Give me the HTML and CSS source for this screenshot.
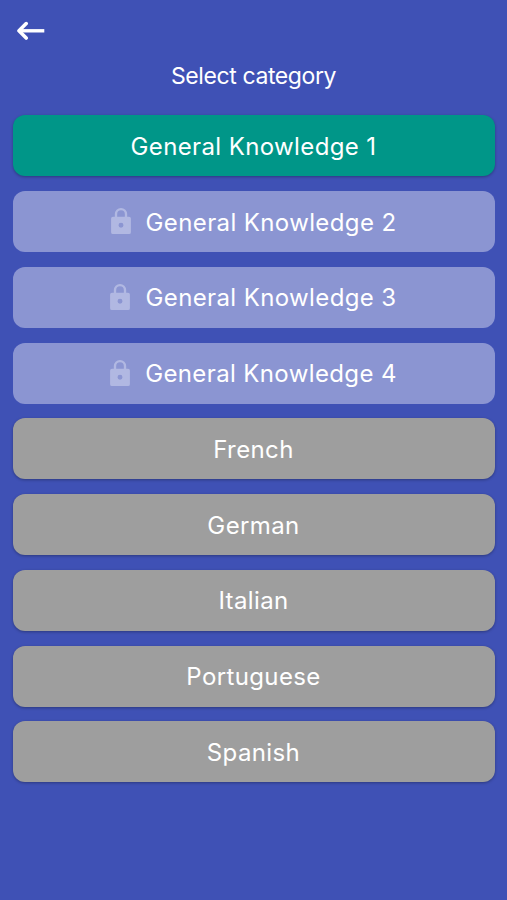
FILE: index.html
```html
<!DOCTYPE html>
<html lang="en">
<head>
<meta charset="utf-8">
<title>Select category</title>
<link rel="stylesheet" href="styles.css">
</head>
<body>
<header class="bar">
  <svg class="back" viewBox="0 0 28 20"><path class="shaft" d="M27.300 9.800H3"/><path class="head" d="M9.200 2.600L2 9.800l7.200 7.200"/></svg>
</header>
<h1 class="title">Select category</h1>
<main class="list">
  <button class="item active"><span class="label">General Knowledge 1</span></button>
  <button class="item locked"><svg class="lock" viewBox="4 1 16 21"><path d="M18.500 8H17V6A5 5 0 0 0 7 6v2H5.500A1.500 1.500 0 0 0 4 9.500v11A1.500 1.500 0 0 0 5.500 22h13a1.500 1.500 0 0 0 1.500-1.500v-11A1.500 1.500 0 0 0 18.500 8zM12 17a2 2 0 1 1 0-4 2 2 0 0 1 0 4zM8.900 8V6a3.100 3.100 0 0 1 6.200 0v2z"/></svg><span class="label">General Knowledge 2</span></button>
  <button class="item locked"><svg class="lock" viewBox="4 1 16 21"><path d="M18.500 8H17V6A5 5 0 0 0 7 6v2H5.500A1.500 1.500 0 0 0 4 9.500v11A1.500 1.500 0 0 0 5.500 22h13a1.500 1.500 0 0 0 1.500-1.500v-11A1.500 1.500 0 0 0 18.500 8zM12 17a2 2 0 1 1 0-4 2 2 0 0 1 0 4zM8.900 8V6a3.100 3.100 0 0 1 6.200 0v2z"/></svg><span class="label">General Knowledge 3</span></button>
  <button class="item locked"><svg class="lock" viewBox="4 1 16 21"><path d="M18.500 8H17V6A5 5 0 0 0 7 6v2H5.500A1.500 1.500 0 0 0 4 9.500v11A1.500 1.500 0 0 0 5.500 22h13a1.500 1.500 0 0 0 1.500-1.500v-11A1.500 1.500 0 0 0 18.500 8zM12 17a2 2 0 1 1 0-4 2 2 0 0 1 0 4zM8.900 8V6a3.100 3.100 0 0 1 6.200 0v2z"/></svg><span class="label">General Knowledge 4</span></button>
  <button class="item"><span class="label">French</span></button>
  <button class="item"><span class="label">German</span></button>
  <button class="item"><span class="label">Italian</span></button>
  <button class="item"><span class="label">Portuguese</span></button>
  <button class="item"><span class="label">Spanish</span></button>
</main>
</body>
</html>
```

FILE: styles.css
```css
* { box-sizing: border-box; }
body {
  margin: 0;
  min-height: 900px;
  background: #3f51b5;
  color: #fff;
  font-family: Inter, "Liberation Sans", sans-serif;
}
.bar { height: 60px; padding: 21px 17px 0; }
.back {
  display: block;
  width: 28px;
  height: 20px;
  fill: none;
  stroke: #fff;
  stroke-linecap: round;
  stroke-linejoin: round;
}
.shaft { stroke-width: 3.4; stroke-linecap: butt; }
.head { stroke-width: 3.6; }
.title {
  margin: 0;
  height: 55.3px;
  padding-top: 1px;
  line-height: 31px;
  font-size: 23px;
  font-weight: 400;
  letter-spacing: -0.4px;
  text-align: center;
}
.list {
  display: grid;
  grid-auto-rows: 61px;
  gap: 14.75px;
  padding: 0 12px 0 13px;
}
.item {
  display: flex;
  align-items: center;
  justify-content: center;
  gap: 15px;
  padding: 0 1px 0 0;
  border: 0;
  border-radius: 12px;
  background: #9e9e9e;
  color: #fff;
  font: 400 24px Inter, "Liberation Sans", sans-serif;
  letter-spacing: 0.38px;
  box-shadow: 0 1px 3px rgba(0, 0, 0, 0.3);
}
.label { padding-top: 1px; }
.active { background: #009688; }
.locked { background: #8b95d2; box-shadow: none; }
.lock { width: 20px; height: 26px; margin-bottom: 1px; fill: #b1b8e2; }
```
